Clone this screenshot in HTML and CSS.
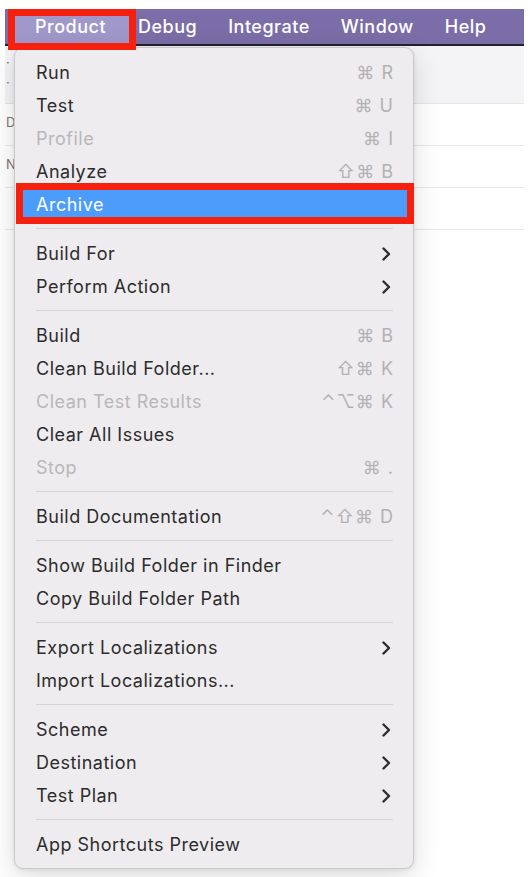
FILE: index.html
```html
<!DOCTYPE html>
<html>
<head>
<meta charset="utf-8">
<link rel="stylesheet" href="styles.css">
</head>
<body>
<div class="window">
  <div class="menubar">
    <div class="mb-item current">Product<span class="annot annot-top"></span></div>
    <div class="mb-item">Debug</div>
    <div class="mb-item">Integrate</div>
    <div class="mb-item">Window</div>
    <div class="mb-item">Help</div>
  </div>
  <div class="app">
    <div class="toolbar"><span class="frag f1">·</span><span class="frag f2">·</span></div>
    <div class="row"><span class="frag">D</span></div>
    <div class="row"><span class="frag">N</span></div>
    <div class="row"></div>
  </div>

  <div class="menu">
    <div class="item"><span class="label">Run</span><span class="key">⌘ R</span></div>
    <div class="item"><span class="label">Test</span><span class="key">⌘ U</span></div>
    <div class="item disabled"><span class="label">Profile</span><span class="key">⌘ I</span></div>
    <div class="item"><span class="label">Analyze</span><span class="key">⇧⌘ B</span></div>
    <div class="item active"><span class="label">Archive</span><span class="annot annot-item"></span></div>
    <div class="sep"></div>
    <div class="item"><span class="label">Build For</span><svg class="chev" width="12" height="14" viewBox="0 0 12 14"><polyline points="2.5,1.5 8,7 2.5,12.5" fill="none" stroke="#2e2e2e" stroke-width="2.4" stroke-linecap="round" stroke-linejoin="round"/></svg></div>
    <div class="item"><span class="label">Perform Action</span><svg class="chev" width="12" height="14" viewBox="0 0 12 14"><polyline points="2.5,1.5 8,7 2.5,12.5" fill="none" stroke="#2e2e2e" stroke-width="2.4" stroke-linecap="round" stroke-linejoin="round"/></svg></div>
    <div class="sep"></div>
    <div class="item"><span class="label">Build</span><span class="key">⌘ B</span></div>
    <div class="item"><span class="label">Clean Build Folder...</span><span class="key">⇧⌘ K</span></div>
    <div class="item disabled"><span class="label">Clean Test Results</span><span class="key">⌃⌥⌘ K</span></div>
    <div class="item"><span class="label">Clear All Issues</span></div>
    <div class="item disabled"><span class="label">Stop</span><span class="key">⌘ .</span></div>
    <div class="sep"></div>
    <div class="item"><span class="label">Build Documentation</span><span class="key">⌃⇧⌘ D</span></div>
    <div class="sep"></div>
    <div class="item"><span class="label">Show Build Folder in Finder</span></div>
    <div class="item"><span class="label">Copy Build Folder Path</span></div>
    <div class="sep"></div>
    <div class="item"><span class="label">Export Localizations</span><svg class="chev" width="12" height="14" viewBox="0 0 12 14"><polyline points="2.5,1.5 8,7 2.5,12.5" fill="none" stroke="#2e2e2e" stroke-width="2.4" stroke-linecap="round" stroke-linejoin="round"/></svg></div>
    <div class="item"><span class="label">Import Localizations...</span></div>
    <div class="sep"></div>
    <div class="item"><span class="label">Scheme</span><svg class="chev" width="12" height="14" viewBox="0 0 12 14"><polyline points="2.5,1.5 8,7 2.5,12.5" fill="none" stroke="#2e2e2e" stroke-width="2.4" stroke-linecap="round" stroke-linejoin="round"/></svg></div>
    <div class="item"><span class="label">Destination</span><svg class="chev" width="12" height="14" viewBox="0 0 12 14"><polyline points="2.5,1.5 8,7 2.5,12.5" fill="none" stroke="#2e2e2e" stroke-width="2.4" stroke-linecap="round" stroke-linejoin="round"/></svg></div>
    <div class="item"><span class="label">Test Plan</span><svg class="chev" width="12" height="14" viewBox="0 0 12 14"><polyline points="2.5,1.5 8,7 2.5,12.5" fill="none" stroke="#2e2e2e" stroke-width="2.4" stroke-linecap="round" stroke-linejoin="round"/></svg></div>
    <div class="sep"></div>
    <div class="item"><span class="label">App Shortcuts Preview</span></div>
  </div>
</div>
</body>
</html>
```
FILE: styles.css
```css
* { box-sizing: border-box; }
html, body { margin: 0; padding: 0; background: #ffffff; }
body {
  width: 530px;
  height: 877px;
  overflow: hidden;
  font-family: Inter, "Liberation Sans", sans-serif;
}
.window {
  position: relative;
  margin: 9px 6px 0 5px;
  width: 519px;
}
.menubar {
  height: 37px;
  background: #7b6ea8;
  border-bottom: 2px solid #23212c;
  display: flex;
  align-items: stretch;
  padding-left: 10px;
}
.mb-item {
  position: relative;
  color: #ffffff;
  font-size: 18px;
  font-weight: 500;
  letter-spacing: 0.5px;
  display: flex;
  align-items: center;
  margin-left: 31px;
}
.mb-item.current {
  background: #a097ca;
  padding: 0 23px 0 20px;
  margin-left: 0;
}
.mb-item.current + .mb-item { margin-left: 9px; }
.annot {
  position: absolute;
  border: 7px solid #f5200e;
  z-index: 5;
  pointer-events: none;
}
.annot-top {
  left: -7px;
  right: -7px;
  top: 0;
  bottom: -6px;
}
.app {
  background: #ffffff;
}
.toolbar {
  height: 58px;
  background: #f4f3f5;
  border-bottom: 1px solid #e4e3e5;
  position: relative;
}
.row {
  height: 42px;
  border-bottom: 1px solid #e8e7e9;
  position: relative;
}
.frag {
  position: absolute;
  left: 1px;
  top: 10px;
  font-size: 13px;
  color: #777;
}
.toolbar .f1 { top: 8px; }
.toolbar .f2 { top: 28px; }
.menu {
  position: absolute;
  left: 9px;
  top: 38px;
  width: 400px;
  background: #eeecee;
  border: 1px solid #c9c8cb;
  border-radius: 9px;
  padding: 8px 0 7px;
  box-shadow: 0 8px 28px rgba(0, 0, 0, 0.14), 0 1px 4px rgba(0, 0, 0, 0.08);
  display: flex;
  flex-direction: column;
}
.item {
  position: relative;
  height: 33px;
  display: flex;
  align-items: center;
  justify-content: space-between;
  padding: 0 15px 0 16px;
  margin: 0 5px;
  font-size: 18px;
  color: #2c2c2c;
  letter-spacing: 0.5px;
}
.item.disabled { color: #b9b7ba; }
.item.active {
  background: #4c9dfb;
  color: #ffffff;
}
.annot-item {
  left: -4px;
  right: -6px;
  top: -5px;
  bottom: -3px;
}
.key {
  color: #b3b1b4;
  font-family: Inter, "DejaVu Sans", sans-serif;
  font-size: 18px;
  letter-spacing: 1px;
  margin-right: -1px;
}
.chev { margin-right: 0; }
.sep {
  height: 1px;
  margin: 7px 20px 8px 21px;
  background: #d6d4d7;
}
```
